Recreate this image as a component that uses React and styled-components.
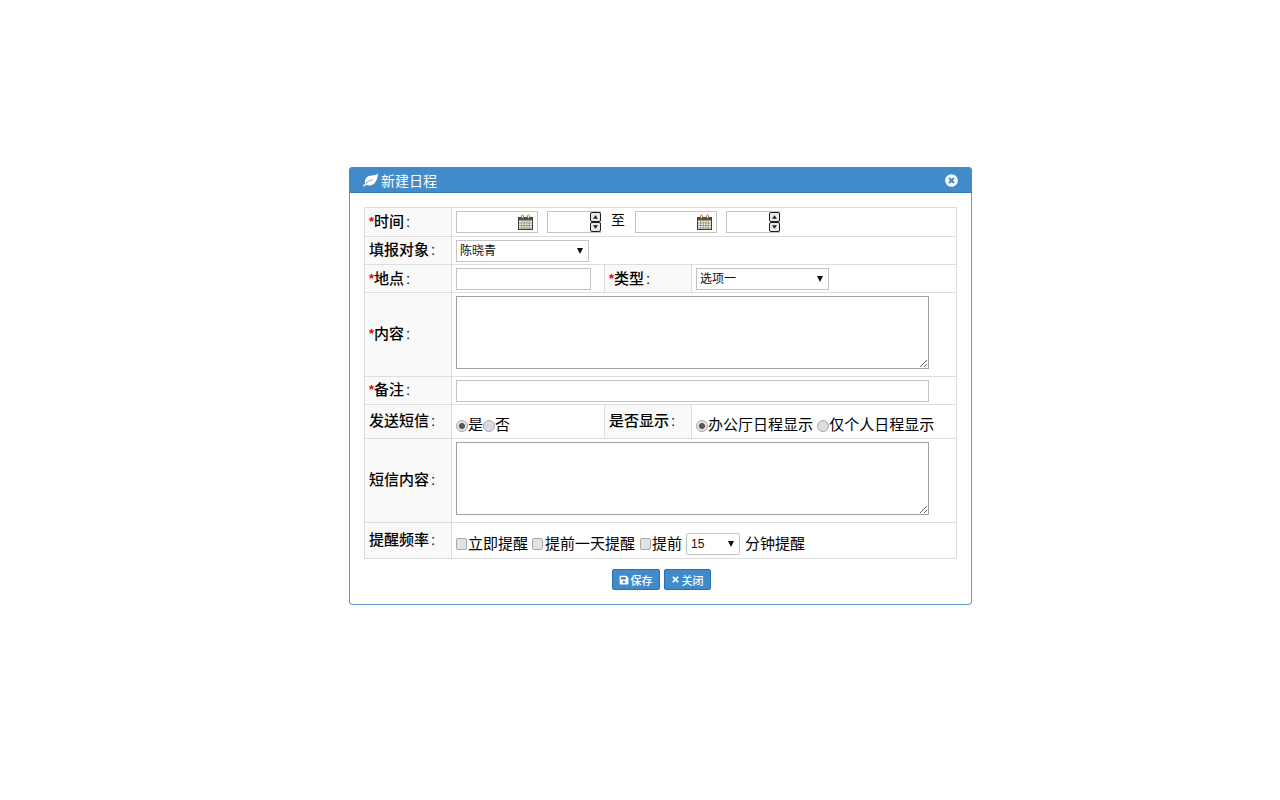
import React from "react";
import styled, { createGlobalStyle } from "styled-components";
import { FaTimesCircle, FaSave, FaTimes } from "react-icons/fa";

const LeafIcon = () => (
  <svg width="15" height="14" viewBox="0 0 15 14">
    <path d="M15 .5c-.3 6.500-3.400 12-8.700 12-1.200 0-2.300-.3-3.200-.8L1 13.800 0 12.800l2-2.100C1 6 4.300 2.500 9 2.500c2.600 0 4.700-.7 6-2z" fill="#fff" />
    <path d="M2.500 10.800C4.500 8.700 6.500 7.500 9.500 6.500" stroke="#428bca" strokeWidth="0.8" fill="none" />
  </svg>
);

const CalendarIcon = () => (
  <svg width="15" height="16" viewBox="0 0 15 16">
    <rect x="0.5" y="3.5" width="14" height="12" fill="#f4efe2" stroke="#3c3f3c" />
    <rect x="1" y="4" width="13" height="2.5" fill="#44564e" />
    <path d="M1 9h13M1 11.500h13M1 14h13M3.700 7v8M6.200 7v8M8.800 7v8M11.300 7v8" stroke="#8f8c7e" strokeWidth="0.8" />
    <path d="M3.500 1.500a1.200 1.200 0 0 1 2 0v2.500h-2zM9.500 1.500a1.200 1.200 0 0 1 2 0v2.500h-2z" fill="#fff" stroke="#b5651d" strokeWidth="0.9" />
  </svg>
);

const Spinner = () => (
  <SpinBox>
    <SpinPart><svg width="5" height="4" viewBox="0 0 6 4"><path d="M3 0l3 4H0z" fill="#222" /></svg></SpinPart>
    <SpinPart><svg width="5" height="4" viewBox="0 0 6 4"><path d="M0 0h6L3 4z" fill="#222" /></svg></SpinPart>
  </SpinBox>
);

const Label = ({ required, children }) => (
  <>
    {required && <Star>*</Star>}
    {children}
    <Colon>:</Colon>
  </>
);

const App = () => {
  return (
    <Page>
      <GlobalStyle />
      <Dialog>
        <Header>
          <Title>
            <LeafIcon />
            新建日程
          </Title>
          <CloseButton><FaTimesCircle size={13} /></CloseButton>
        </Header>
        <Body>
          <FormTable>
            <colgroup>
              <col width="87" />
              <col width="153" />
              <col width="87" />
              <col width="265" />
            </colgroup>
            <tbody>
              <Row $h={29}>
                <LabelCell><Label required>时间</Label></LabelCell>
                <FieldCell colSpan={3}>
                  <Inline>
                    <PickerWrap $w={82}><TextInput $w={82} /><PickerIcon><CalendarIcon /></PickerIcon></PickerWrap>
                    <PickerWrap $w={54} $ml={9}><TextInput $w={54} /><Spinner /></PickerWrap>
                    <ToText>至</ToText>
                    <PickerWrap $w={82}><TextInput $w={82} /><PickerIcon><CalendarIcon /></PickerIcon></PickerWrap>
                    <PickerWrap $w={54} $ml={9}><TextInput $w={54} /><Spinner /></PickerWrap>
                  </Inline>
                </FieldCell>
              </Row>
              <Row $h={28}>
                <LabelCell><Label>填报对象</Label></LabelCell>
                <FieldCell colSpan={3}>
                  <SelectWrap $w={133}>
                    <Select><option>陈晓青</option></Select>
                  </SelectWrap>
                </FieldCell>
              </Row>
              <Row $h={28}>
                <LabelCell $pb={0}><Label required>地点</Label></LabelCell>
                <FieldCell><TextInput $w={135} /></FieldCell>
                <LabelCell $pb={0}><Label required>类型</Label></LabelCell>
                <FieldCell>
                  <SelectWrap $w={133}>
                    <Select><option>选项一</option></Select>
                  </SelectWrap>
                </FieldCell>
              </Row>
              <Row $h={84}>
                <LabelCell><Label required>内容</Label></LabelCell>
                <AreaCell colSpan={3}><Area /></AreaCell>
              </Row>
              <Row $h={28}>
                <LabelCell><Label required>备注</Label></LabelCell>
                <FieldCell colSpan={3}><TextInput $w={473} /></FieldCell>
              </Row>
              <Row $h={34}>
                <LabelCell $pb={3}><Label>发送短信</Label></LabelCell>
                <ChoiceCell>
                  <Radio name="sms" defaultChecked />是<Radio name="sms" />否
                </ChoiceCell>
                <LabelCell $pb={3}><Label>是否显示</Label></LabelCell>
                <ChoiceCell>
                  <Radio name="show" defaultChecked />办公厅日程显示 <Radio name="show" />仅个人日程显示
                </ChoiceCell>
              </Row>
              <Row $h={84}>
                <LabelCell><Label>短信内容</Label></LabelCell>
                <AreaCell colSpan={3}><Area /></AreaCell>
              </Row>
              <Row $h={36}>
                <LabelCell $pb={2}><Label>提醒频率</Label></LabelCell>
                <ChoiceCell colSpan={3}>
                  <Inline>
                    <Check />立即提醒
                    <Check $ml={4} $mr={2} />提前一天提醒
                    <Check $ml={5} />提前
                    <SelectWrap $w={54} $ml={4} $mr={5}>
                      <NumberSelect><option>15</option></NumberSelect>
                    </SelectWrap>
                    分钟提醒
                  </Inline>
                </ChoiceCell>
              </Row>
            </tbody>
          </FormTable>
          <Actions>
            <ActionButton><FaSave size={10} />保存</ActionButton>
            <ActionButton><FaTimes size={9} />关闭</ActionButton>
          </Actions>
        </Body>
      </Dialog>
    </Page>
  );
};

export default App;

// style component

const GlobalStyle = createGlobalStyle`
  html, body {
    margin: 0;
    padding: 0;
    background: #fff;
  }
  body {
    font-family: "Liberation Sans", "Noto Sans CJK SC", sans-serif;
    color: #000;
  }
`;

const Page = styled.div`
  width: 1280px;
  height: 800px;
  box-sizing: border-box;
  padding: 167px 0 0 349px;
  overflow: hidden;
`;

const Dialog = styled.div`
  width: 623px;
  height: 438px;
  box-sizing: border-box;
  border: 1px solid #5b9bd5;
  border-top-color: #3f87c6;
  border-radius: 4px;
  background: #fff;
`;

const Header = styled.div`
  height: 26px;
  margin: -1px -1px 0;
  box-sizing: border-box;
  padding: 0 14px;
  display: flex;
  align-items: center;
  justify-content: space-between;
  background: #428bca;
  border-bottom: 1px solid #357ebd;
  border-radius: 4px 4px 0 0;
  color: #fff;
`;

const Title = styled.div`
  display: flex;
  align-items: center;
  gap: 3px;
  font-size: 14px;
`;

const CloseButton = styled.span`
  display: flex;
  margin-top: 2px;
  color: #fff;
`;

const Body = styled.div`
  padding: 14px 13px 0 14px;
`;

const FormTable = styled.table`
  width: 592px;
  table-layout: fixed;
  border-collapse: collapse;
  font-size: 15px;
  line-height: 1;
`;

const Row = styled.tr`
  height: ${(props) => props.$h}px;
`;

const LabelCell = styled.td`
  box-sizing: border-box;
  padding: 0 4px ${(props) => props.$pb ?? 2}px;
  border: 1px solid #ddd;
  background: #f9f9f9;
  white-space: nowrap;
  color: #000;
  font-weight: 500;
`;

const FieldCell = styled.td`
  box-sizing: border-box;
  padding: 0 4px;
  border: 1px solid #ddd;
  background: #fff;
  vertical-align: middle;
  white-space: nowrap;
`;

const AreaCell = styled(FieldCell)`
  padding-top: 3px;
  vertical-align: top;
`;

const ChoiceCell = styled(FieldCell)`
  padding-top: 6px;
`;

const Star = styled.span`
  color: #e00000;
  font-weight: 700;
  font-size: 13px;
  vertical-align: 1px;
`;

const Colon = styled.span`
  margin-left: 2px;
`;

const Inline = styled.div`
  display: flex;
  align-items: center;
  white-space: pre;
`;

const PickerWrap = styled.span`
  position: relative;
  display: inline-flex;
  width: ${(props) => props.$w}px;
  margin-left: ${(props) => props.$ml || 0}px;
`;

const TextInput = styled.input.attrs({ type: "text" })`
  display: block;
  box-sizing: border-box;
  width: ${(props) => props.$w}px;
  height: 22px;
  padding: 0 4px;
  margin: 0;
  background: #fff;
  border: 1px solid #c4c4c4;
  outline: none;
`;

const PickerIcon = styled.span`
  position: absolute;
  top: 3px;
  right: 5px;
  display: flex;
`;

const SpinBox = styled.span`
  position: absolute;
  top: 1px;
  right: 0;
  width: 11px;
  height: 20px;
  display: flex;
  flex-direction: column;
`;

const SpinPart = styled.span`
  flex: 1;
  box-sizing: border-box;
  display: flex;
  align-items: center;
  justify-content: center;
  background: #e8e8e8;
  border: 1.5px solid #1d1d28;
  border-radius: 2px;
`;

const ToText = styled.span`
  width: 34px;
  text-align: center;
  font-size: 14px;
  margin-bottom: 4px;
`;

const SelectWrap = styled.span`
  position: relative;
  display: inline-block;
  width: ${(props) => props.$w}px;
  height: 22px;
  margin-left: ${(props) => props.$ml || 0}px;
  margin-right: ${(props) => props.$mr || 0}px;
  vertical-align: middle;

  &::after {
    content: "";
    position: absolute;
    top: 8px;
    right: 6px;
    border-style: solid;
    border-width: 6px 3px 0;
    border-color: #111 transparent transparent;
    pointer-events: none;
  }
`;

const Select = styled.select`
  appearance: none;
  display: block;
  box-sizing: border-box;
  width: 100%;
  height: 22px;
  padding: 0 3px;
  margin: 0;
  background: #fff;
  border: 1px solid #c4c4c4;
  border-radius: 0;
  outline: none;
  color: #111;
  font-family: "Liberation Sans", "Noto Sans CJK SC", sans-serif;
  font-size: 12px;
`;

const NumberSelect = styled(Select)`
  padding: 0 4px;
  border-radius: 2px;
`;

const Area = styled.textarea`
  display: block;
  box-sizing: border-box;
  width: 473px;
  height: 73px;
  margin: 0;
  padding: 2px;
  background: #fff;
  border: 1px solid #a0a0a0;
  outline: none;
  resize: vertical;
`;

const Radio = styled.input.attrs({ type: "radio" })`
  appearance: none;
  box-sizing: border-box;
  width: 12px;
  height: 12px;
  margin: 0;
  vertical-align: -2px;
  border: 1px solid #a8a8a8;
  border-radius: 50%;
  background: #dcdcdc;

  &:checked {
    background: radial-gradient(circle, #555 0 2.6px, #e4e4e4 3.4px);
  }
`;

const Check = styled.input.attrs({ type: "checkbox" })`
  appearance: none;
  box-sizing: border-box;
  width: 11px;
  height: 12px;
  margin: 0 ${(props) => props.$mr || 1}px 0 ${(props) => props.$ml || 0}px;
  border: 1px solid #a8a8a8;
  border-radius: 2px;
  background: #e2e2e2;
`;

const Actions = styled.div`
  display: flex;
  justify-content: center;
  gap: 4px;
  margin-top: 10px;
`;

const ActionButton = styled.button`
  display: flex;
  align-items: center;
  justify-content: center;
  gap: 2px;
  box-sizing: border-box;
  height: 21px;
  padding: 0 6px;
  background: #428bca;
  border: 1px solid #2f70a9;
  border-radius: 2px;
  color: #fff;
  font-family: "Liberation Sans", "Noto Sans CJK SC", sans-serif;
  font-size: 11px;
  font-weight: 500;
`;
